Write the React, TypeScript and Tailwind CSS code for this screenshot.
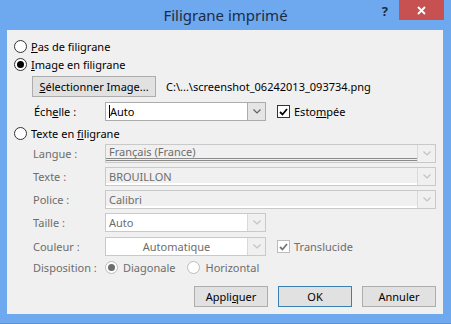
import React from "react";

const font = { fontFamily: '"Noto Sans", "Open Sans", sans-serif' };

function Chevron({ color }: { color: string }) {
  return (
    <svg width="8" height="5" viewBox="0 0 8 5">
      <polyline points="0.5,0.5 4,4 7.5,0.5" fill="none" stroke={color} strokeWidth="1.2" />
    </svg>
  );
}

function Radio({ checked, disabled }: { checked?: boolean; disabled?: boolean }) {
  return (
    <span
      className={`flex items-center justify-center w-[13px] h-[13px] rounded-full border bg-white ${
        disabled ? "border-[#bcbcbc]" : "border-[#333]"
      }`}
    >
      {checked && (
        <span className={`w-[7px] h-[7px] rounded-full ${disabled ? "bg-[#6d6d6d]" : "bg-black"}`} />
      )}
    </span>
  );
}

function Check({ disabled }: { disabled?: boolean }) {
  return (
    <span
      className={`flex items-center justify-center w-[13px] h-[13px] border bg-white ${
        disabled ? "border-[#bcbcbc]" : "border-[#333]"
      }`}
    >
      <svg width="9" height="8" viewBox="0 0 9 8">
        <polyline
          points="1,4 3.5,6.5 8,1"
          fill="none"
          stroke={disabled ? "#777" : "#000"}
          strokeWidth="1.8"
        />
      </svg>
    </span>
  );
}

function Combo({
  value,
  width,
  variant,
  center,
}: {
  value: string;
  width: string;
  variant: "active" | "white" | "gray" | "lang";
  center?: boolean;
}) {
  const active = variant === "active";
  const boxBorder = active ? "border-[#acacac]" : "border-[#c9c9c9]";
  const bg = variant === "active" || variant === "white" ? "bg-white" : "bg-[#f0f0f0]";
  const inner =
    variant === "gray"
      ? "shadow-[inset_0_-2px_0_#fff]"
      : variant === "lang"
      ? "shadow-[inset_0_-1px_0_#f0f0f0,inset_0_-2px_0_#8a8a8a,inset_0_-3px_0_#f0f0f0,inset_0_-4px_0_#8a8a8a]"
      : "";
  return (
    <div className={`flex h-[19px] ${width} border ${boxBorder} ${bg}`}>
      <div
        className={`flex flex-1 h-full ${center ? "justify-center" : "pl-[3px]"} ${inner} ${
          active ? "text-black" : "text-[#6d6d6d]"
        } ${variant === "lang" ? "items-start pt-[1px]" : "items-center"}`}
      >
        {active && <span className="w-px h-[13px] bg-black" />}
        {value}
      </div>
      <div
        className={`flex items-center justify-center w-[18px] h-full border-l ${
          active ? "border-[#acacac] bg-[#e5e5e5]" : "border-[#d9d9d9] bg-[#f0f0f0]"
        }`}
      >
        <Chevron color={active ? "#606060" : "#c2c2c2"} />
      </div>
    </div>
  );
}

function Label({ children }: { children: React.ReactNode }) {
  return <span className="w-[72px] shrink-0 text-[#6d6d6d]">{children}</span>;
}

function Btn({ children, primary }: { children: React.ReactNode; primary?: boolean }) {
  return (
    <div
      className={`flex items-center justify-center h-[21px] w-[74px] border ${
        primary ? "border-[#3c7fb1]" : "border-[#adadad]"
      } bg-[#e1e1e1] text-black`}
    >
      {children}
    </div>
  );
}

export default function App() {
  return (
    <div
      className="w-[451px] h-[324px] bg-[#6ea8ee] flex flex-col border-b border-[#5b93d8] text-[11px] leading-none"
      style={font}
    >
      {/* Title bar */}
      <div className="flex h-[30px] shrink-0 relative">
        <div className="flex-1 flex items-center justify-center pt-[1px] text-[15px] text-[#1d2c45]">
          Filigrane imprimé
        </div>
        <div className="absolute right-[7px] top-0 flex items-start">
          <span className="mr-[11px] mt-[5px] text-[13px] font-bold text-[#1d2c45]">?</span>
          <div className="flex items-center justify-center w-[45px] h-[20px] bg-[#c75050]">
            <svg width="9" height="9" viewBox="0 0 9 9">
              <path d="M1 1 L8 8 M8 1 L1 8" stroke="#fff" strokeWidth="1.8" />
            </svg>
          </div>
        </div>
      </div>

      {/* Panel */}
      <div className="ml-[7px] mr-[8px] h-[284px] bg-[#f0f0f0] flex flex-col pt-[7px] pl-[7px] pr-[7px]">
        <div className="flex items-center h-[18px] gap-[4px]">
          <Radio />
          <span>
            <u>P</u>as de filigrane
          </span>
        </div>
        <div className="flex items-center h-[18px] gap-[4px]">
          <Radio checked />
          <span>
            <u>I</u>mage en filigrane
          </span>
        </div>

        <div className="flex items-center h-[21px] mt-[3px] pl-[18px]">
          <div className="flex items-center justify-center w-[124px] h-[21px] border border-[#adadad] bg-[#e1e1e1]">
            <span>
              <u>S</u>électionner Image...
            </span>
          </div>
          <span className="ml-[10px]">C:\...\screenshot_06242013_093734.png</span>
        </div>

        <div className="flex items-center h-[19px] mt-[5px] pl-[20px]">
          <span className="w-[71px] shrink-0">
            Éch<u>e</u>lle :
          </span>
          <Combo value="Auto" width="w-[161px]" variant="active" />
          <span className="ml-[11px] mr-[4px]">
            <Check />
          </span>
          <span>
            Esto<u>m</u>pée
          </span>
        </div>

        <div className="flex items-center h-[18px] mt-[3px] gap-[4px]">
          <Radio />
          <span>
            Texte en <u>f</u>iligrane
          </span>
        </div>

        <div className="flex items-center h-[19px] mt-[2px] pl-[19px]">
          <Label>Langue :</Label>
          <Combo value="Français (France)" width="w-[332px]" variant="lang" />
        </div>
        <div className="flex items-center h-[19px] mt-[4px] pl-[19px]">
          <Label>Texte :</Label>
          <Combo value="BROUILLON" width="w-[332px]" variant="gray" />
        </div>
        <div className="flex items-center h-[19px] mt-[4px] pl-[19px]">
          <Label>Police :</Label>
          <Combo value="Calibri" width="w-[332px]" variant="gray" />
        </div>
        <div className="flex items-center h-[19px] mt-[4px] pl-[19px]">
          <Label>Taille :</Label>
          <Combo value="Auto" width="w-[161px]" variant="white" />
        </div>
        <div className="flex items-center h-[19px] mt-[5px] pl-[19px]">
          <Label>Couleur :</Label>
          <Combo value="Automatique" width="w-[161px]" variant="white" center />
          <span className="ml-[11px] mr-[4px]">
            <Check disabled />
          </span>
          <span className="text-[#6d6d6d]">Translucide</span>
        </div>

        <div className="flex items-center h-[18px] mt-[2px] pl-[19px] text-[#6d6d6d]">
          <Label>Disposition :</Label>
          <Radio checked disabled />
          <span className="ml-[5px]">Diagonale</span>
          <span className="ml-[12px]">
            <Radio disabled />
          </span>
          <span className="ml-[5px]">Horizontal</span>
        </div>

        <div className="flex justify-end items-center h-[21px] mt-[10px] gap-[10px]">
          <Btn>
            Appli<u>q</u>uer
          </Btn>
          <Btn primary>OK</Btn>
          <Btn>Annuler</Btn>
        </div>
      </div>
    </div>
  );
}
